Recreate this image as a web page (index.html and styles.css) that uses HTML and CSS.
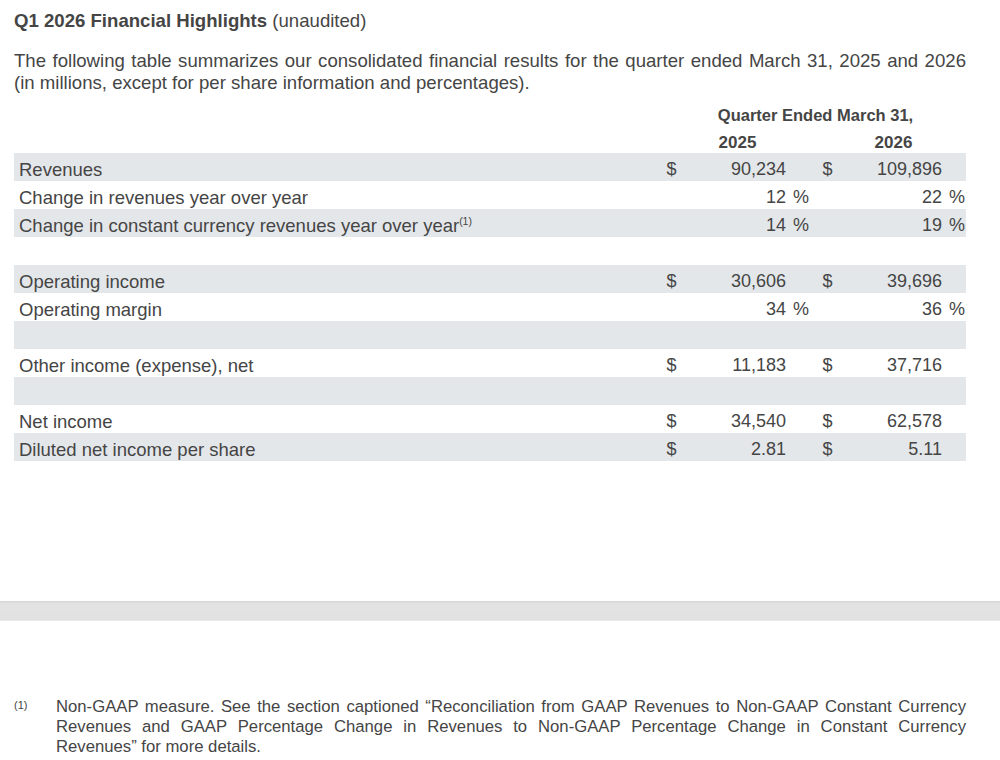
FILE: index.html
```html
<!DOCTYPE html>
<html lang="en">
<head>
  <meta charset="UTF-8" />
  <title>Q1 2026 Financial Highlights</title>
  <link rel="stylesheet" href="styles.css">
</head>
<body>
  <div class="page">
    <h1 class="title">Q1 2026 Financial Highlights <span class="muted">(unaudited)</span></h1>
    <p class="intro">The following table summarizes our consolidated financial results for the quarter ended March 31, 2025 and 2026 (in millions, except for per share information and percentages).</p>

    <table class="highlights">
      <colgroup>
        <col class="c-label">
        <col class="c-cur">
        <col class="c-num">
        <col class="c-pct">
        <col class="c-cur">
        <col class="c-num">
        <col class="c-pct">
      </colgroup>
      <thead>
        <tr class="period-row">
          <th colspan="2"></th>
          <th colspan="4">Quarter Ended March 31,</th>
          <th></th>
        </tr>
        <tr class="year-row">
          <th colspan="2"></th>
          <th>2025</th>
          <th colspan="2"></th>
          <th>2026</th>
          <th></th>
        </tr>
      </thead>
      <tbody>
        <tr>
          <td class="label">Revenues</td>
          <td class="cur">$</td><td class="num">90,234</td><td class="pct"></td>
          <td class="cur">$</td><td class="num">109,896</td><td class="pct"></td>
        </tr>
        <tr>
          <td class="label">Change in revenues year over year</td>
          <td class="cur"></td><td class="num">12</td><td class="pct">%</td>
          <td class="cur"></td><td class="num">22</td><td class="pct">%</td>
        </tr>
        <tr>
          <td class="label">Change in constant currency revenues year over year<sup>(1)</sup></td>
          <td class="cur"></td><td class="num">14</td><td class="pct">%</td>
          <td class="cur"></td><td class="num">19</td><td class="pct">%</td>
        </tr>
        <tr class="spacer"><td colspan="7"></td></tr>
        <tr>
          <td class="label">Operating income</td>
          <td class="cur">$</td><td class="num">30,606</td><td class="pct"></td>
          <td class="cur">$</td><td class="num">39,696</td><td class="pct"></td>
        </tr>
        <tr>
          <td class="label">Operating margin</td>
          <td class="cur"></td><td class="num">34</td><td class="pct">%</td>
          <td class="cur"></td><td class="num">36</td><td class="pct">%</td>
        </tr>
        <tr class="spacer"><td colspan="7"></td></tr>
        <tr>
          <td class="label">Other income (expense), net</td>
          <td class="cur">$</td><td class="num">11,183</td><td class="pct"></td>
          <td class="cur">$</td><td class="num">37,716</td><td class="pct"></td>
        </tr>
        <tr class="spacer"><td colspan="7"></td></tr>
        <tr>
          <td class="label">Net income</td>
          <td class="cur">$</td><td class="num">34,540</td><td class="pct"></td>
          <td class="cur">$</td><td class="num">62,578</td><td class="pct"></td>
        </tr>
        <tr>
          <td class="label">Diluted net income per share</td>
          <td class="cur">$</td><td class="num">2.81</td><td class="pct"></td>
          <td class="cur">$</td><td class="num">5.11</td><td class="pct"></td>
        </tr>
      </tbody>
    </table>
  </div>

  <div class="page-break"></div>

  <div class="page footnotes">
    <div class="footnote">
      <span class="marker">(1)</span>
      <p>Non-GAAP measure. See the section captioned &ldquo;Reconciliation from GAAP Revenues to Non-GAAP Constant Currency Revenues and GAAP Percentage Change in Revenues to Non-GAAP Percentage Change in Constant Currency Revenues&rdquo; for more details.</p>
    </div>
  </div>
</body>
</html>
```

FILE: styles.css
```css
:root {
  --text: #454545;
  --band: #e4e7ea;
}
html, body {
  margin: 0;
  padding: 0;
  background: #fff;
  color: var(--text);
  font-family: "Liberation Sans", Arial, sans-serif;
}
.page {
  padding: 0 34px 0 14px;
}
.title {
  margin: 0;
  padding-top: 10px;
  font-size: 18.6px;
  line-height: 22px;
  font-weight: bold;
}
.title .muted {
  font-weight: normal;
}
.intro {
  margin: 18px 0 0;
  font-size: 18.6px;
  line-height: 22px;
  text-align: justify;
}
.highlights {
  width: 100%;
  margin-top: 6px;
  border-collapse: collapse;
  table-layout: fixed;
  font-size: 18px;
}
.c-cur { width: 35px; }
.c-num { width: 97px; }
.c-pct { width: 24px; }
.highlights th {
  padding: 0;
  font-weight: bold;
  text-align: center;
  vertical-align: top;
  line-height: 20px;
}
.period-row th {
  height: 28px;
  padding-top: 5px;
  font-size: 16.5px;
  box-sizing: border-box;
}
.year-row th {
  height: 25px;
  padding-top: 5px;
  font-size: 17px;
  box-sizing: border-box;
}
.highlights tbody tr {
  height: 28px;
}
.highlights tbody tr:nth-child(odd) {
  background: var(--band);
}
.highlights td {
  padding: 6px 0 0;
  line-height: 21px;
  vertical-align: top;
  white-space: nowrap;
  box-sizing: border-box;
}
.highlights .label {
  padding-left: 5px;
  font-size: 18.5px;
}
.highlights .cur {
  text-align: center;
}
.highlights .num {
  text-align: right;
}
.highlights .pct {
  text-align: right;
  padding-right: 1px;
}
.highlights sup {
  font-size: 10.5px;
  vertical-align: 7px;
  line-height: 0;
}
.page-break {
  height: 19px;
  margin-top: 140px;
  background: linear-gradient(#d6d6d6, #e3e3e3 3px, #e1e1e1);
  border-bottom: 1px solid #e9e9e9;
}
.footnotes {
  padding-top: 76px;
}
.footnote {
  display: flex;
}
.footnote .marker {
  flex: 0 0 42px;
  font-size: 11px;
  line-height: 14px;
  padding-top: 1px;
}
.footnote p {
  margin: 0;
  font-size: 16.7px;
  line-height: 20px;
  text-align: justify;
}
```
